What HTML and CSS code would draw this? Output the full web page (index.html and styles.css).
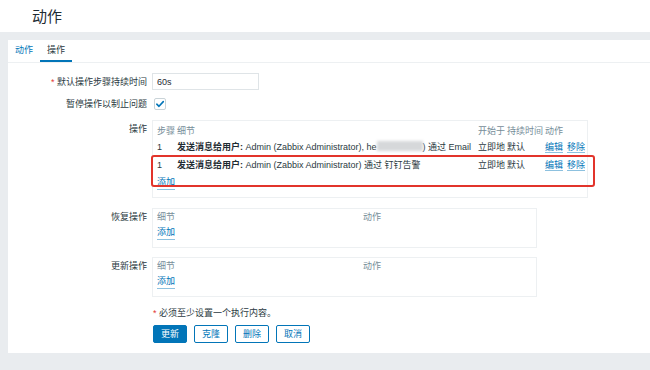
FILE: index.html
```html
<!DOCTYPE html>
<html lang="zh">
<head>
<meta charset="utf-8">
<title>动作</title>
<link rel="stylesheet" href="styles.css">
</head>
<body>
<header class="page-header"><h1 class="page-title">动作</h1></header>
<main class="panel">
  <nav class="tabs">
    <span class="tab tab-link">动作</span>
    <span class="tab tab-active">操作</span>
  </nav>
  <div class="form">
    <div class="row row-duration">
      <div class="lbl"><span class="req">*</span> 默认操作步骤持续时间</div>
      <div class="field"><input class="input" value="60s"></div>
    </div>
    <div class="row row-check">
      <div class="lbl">暂停操作以制止问题</div>
      <div class="field">
        <span class="checkbox"><svg width="10" height="10" viewBox="0 0 10 10"><path d="M1.8 5.2 L4 7.3 L8.3 2.6" fill="none" stroke="#0275b8" stroke-width="1.6" stroke-linecap="round" stroke-linejoin="round"/></svg></span>
      </div>
    </div>
    <div class="row row-box">
      <div class="lbl lbl-top">操作</div>
      <div class="field">
        <div class="box box-ops">
          <table class="tbl">
            <thead>
              <tr><th class="c-step">步骤</th><th class="c-detail">细节</th><th class="c-start">开始于</th><th class="c-dur">持续时间</th><th class="c-act">动作</th></tr>
            </thead>
            <tbody>
              <tr><td>1</td><td><b>发送消息给用户:</b> Admin (Zabbix Administrator), he<span class="blurred"></span>) 通过 Email</td><td>立即地</td><td>默认</td><td><span class="link">编辑</span><span class="link link-gap">移除</span></td></tr>
              <tr><td>1</td><td><b>发送消息给用户:</b> Admin (Zabbix Administrator) 通过 钉钉告警</td><td>立即地</td><td>默认</td><td><span class="link">编辑</span><span class="link link-gap">移除</span></td></tr>
            </tbody>
          </table>
          <span class="link add">添加</span>
          <div class="highlight"></div>
        </div>
      </div>
    </div>
    <div class="row row-box row-recovery">
      <div class="lbl lbl-top">恢复操作</div>
      <div class="field">
        <div class="box box-small">
          <table class="tbl">
            <thead><tr><th class="c-detail2">细节</th><th>动作</th></tr></thead>
          </table>
          <span class="link add">添加</span>
        </div>
      </div>
    </div>
    <div class="row row-box row-update">
      <div class="lbl lbl-top">更新操作</div>
      <div class="field">
        <div class="box box-small">
          <table class="tbl">
            <thead><tr><th class="c-detail2">细节</th><th>动作</th></tr></thead>
          </table>
          <span class="link add">添加</span>
        </div>
      </div>
    </div>
    <div class="row row-note">
      <div class="lbl"></div>
      <div class="field note"><span class="req">*</span> 必须至少设置一个执行内容。</div>
    </div>
    <div class="row row-buttons">
      <div class="lbl"></div>
      <div class="field buttons">
        <button class="btn btn-primary">更新</button>
        <button class="btn">克隆</button>
        <button class="btn">删除</button>
        <button class="btn">取消</button>
      </div>
    </div>
  </div>
</main>
</body>
</html>
```
FILE: styles.css
```css
* { box-sizing: border-box; margin: 0; padding: 0; }
html, body { height: 100%; }
body {
  background: #e9ecef;
  font-family: "Liberation Sans", "Noto Sans CJK SC", sans-serif;
  font-size: 9px;
  line-height: 14px;
  color: #2b3a42;
}
.page-header {
  background: #fff;
  height: 32px;
  padding-left: 32px;
  margin-bottom: 8px;
}
.page-title {
  font-size: 15px;
  font-weight: normal;
  line-height: 33px;
  color: #1f2c33;
}
.panel {
  background: #fff;
  margin-left: 8px;
  padding-bottom: 10px;
}
.tabs {
  display: flex;
  height: 23px;
  border-bottom: 1px solid #edf0f2;
}
.tab {
  height: 22px;
  padding: 1px 7px 0;
  line-height: 19px;
  border-bottom: 2px solid transparent;
}
.tab-link { color: #0275b8; }
.tab-active { border-bottom-color: #0275b8; }

.form { display: flex; flex-direction: column; }
.row {
  display: grid;
  grid-template-columns: 139px auto;
  column-gap: 5px;
  align-items: center;
}
.lbl { text-align: right; white-space: nowrap; }
.lbl-top { align-self: start; padding-top: 2px; }
.req { color: #e33734; }

.row-duration { margin-top: 10px; height: 17px; }
.input {
  display: block;
  width: 107px;
  height: 17px;
  border: 1px solid #dfe4e7;
  padding: 0 4px;
  font: inherit;
  color: #1f2c33;
  background: #fff;
}
.row-check { margin-top: 7px; height: 14px; }
.checkbox {
  display: flex;
  align-items: center;
  justify-content: center;
  width: 12px;
  height: 12px;
  margin-left: 2px;
  border: 1px solid #c9d3d8;
  border-radius: 2px;
  background: #fff;
}

.row-box { margin-top: 9px; }
.row-recovery { margin-top: 10px; }
.row-update { margin-top: 9px; }

.box {
  position: relative;
  border: 1px solid #edf0f2;
  padding: 3px 4px 7px;
}
.box-ops { width: 436px; }
.box-small { width: 385px; padding-top: 1px; }

.tbl { border-collapse: collapse; table-layout: fixed; width: 100%; }
.tbl th {
  font-weight: normal;
  color: #768d99;
  text-align: left;
  padding: 0;
  height: 14px;
  white-space: nowrap;
}
.tbl td {
  padding: 2px 0;
  height: 18px;
  white-space: nowrap;
  vertical-align: middle;
}
.tbl b { font-weight: bold; color: #1f2c33; }
.c-step { width: 20px; }
.c-detail { width: 301px; }
.c-start { width: 29px; }
.c-dur { width: 38px; }
.c-detail2 { width: 206px; }

.link {
  color: #0275b8;
  border-bottom: 1px solid rgba(2, 117, 184, 0.45);
}
.link-gap { margin-left: 4px; }
.add {
  display: inline-block;
  margin-top: 2px;
  line-height: 13px;
}
.blurred {
  display: inline-block;
  width: 46px;
  height: 10px;
  vertical-align: -1px;
  background: #d6d8da;
  filter: blur(1.5px);
}
.highlight {
  position: absolute;
  left: -2px;
  top: 34px;
  width: 444px;
  height: 32px;
  border: 2px solid #e2342b;
  border-radius: 3px;
}

.row-note { margin-top: 9px; }
.note { padding-left: 1px; }
.row-buttons { margin-top: 5px; }
.buttons { display: flex; gap: 7px; padding-left: 1px; }
.btn {
  width: 34px;
  height: 18px;
  border: 1px solid #0275b8;
  border-radius: 2px;
  background: #fff;
  color: #0275b8;
  font: inherit;
  line-height: 16px;
}
.btn-primary { background: #0275b8; color: #fff; }
```
